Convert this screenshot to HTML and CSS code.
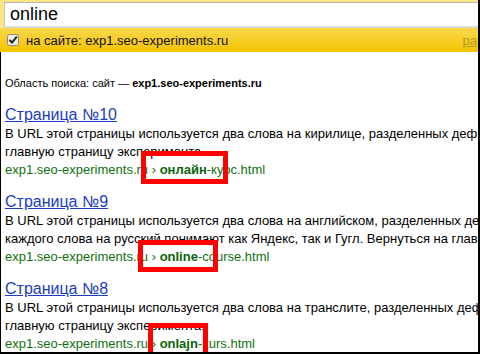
FILE: index.html
```html
<!DOCTYPE html>
<html lang="ru">
<head>
    <meta charset="UTF-8">
    <title>online — поиск по сайту</title>
    <link rel="stylesheet" href="styles.css">
</head>
<body>

<div class="page">
    <div class="header">
        <div class="search-box">online</div>
        <div class="site-row">
            <svg class="check" width="12" height="12" viewBox="0 0 12 12">
                <rect x="0.5" y="0.5" width="11" height="11" rx="2" fill="#ececE6" stroke="#8a8a80"/>
                <path d="M2.5 6 L5 8.6 L9.8 2.6" fill="none" stroke="#222" stroke-width="2"/>
            </svg>
            <span class="site-label">на сайте: exp1.seo-experiments.ru</span>
            <a class="more" href="#">ра</a>
        </div>
    </div>

    <div class="content">
        <div class="scope">Область поиска: сайт — <b>exp1.seo-experiments.ru</b></div>

        <div class="result">
            <a class="title" href="#">Страница №10</a>
            <div class="line">В URL этой страницы используется два слова на кирилице, разделенных дефи</div>
            <div class="line">главную страницу эксперимента.</div>
            <div class="url">exp1.seo-experiments.ru › <b>онлайн</b>-курс.html</div>
        </div>

        <div class="result">
            <a class="title" href="#">Страница №9</a>
            <div class="line">В URL этой страницы используется два слова на английском, разделенных де</div>
            <div class="line">каждого слова на русский понимают как Яндекс, так и Гугл. Вернуться на глав</div>
            <div class="url">exp1.seo-experiments.ru › <b>online</b>-course.html</div>
        </div>

        <div class="result">
            <a class="title" href="#">Страница №8</a>
            <div class="line">В URL этой страницы используется два слова на транслите, разделенных деф</div>
            <div class="line">главную страницу эксперимента.</div>
            <div class="url">exp1.seo-experiments.ru › <b>onlajn</b>-kurs.html</div>
        </div>
    </div>

    <div class="mark mark-1"></div>
    <div class="mark mark-2"></div>
    <div class="mark mark-3"></div>
</div>

</body>
</html>
```

FILE: styles.css
```css
body {
    margin: 0;
    background-color: #fff;
    font-family: "Liberation Sans", Arial, sans-serif;
}

.page {
    position: relative;
    width: 478px;
    height: 352px;
    overflow: hidden;
    border-right: 2px solid #000;
    border-bottom: 2px solid #000;
}

.header {
    padding-top: 2px;
    background-color: #fde586;
}

.search-box {
    height: 26px;
    margin-left: 4px;
    padding-left: 5px;
    box-sizing: border-box;
    background-color: #fff;
    border-top: 1px solid #b8b8b0;
    border-left: 1px solid #c8c8c0;
    border-bottom: 2px solid #dcdcd4;
    font-size: 18px;
    line-height: 23px;
    color: #000;
}

.site-row {
    display: flex;
    align-items: center;
    height: 24px;
    padding-left: 7px;
    background: linear-gradient(#fad84e, #f4c300);
    font-size: 13px;
    color: #111;
}

.check {
    flex: none;
    margin-right: 7px;
}

.site-label {
    white-space: nowrap;
    flex: 1;
}

.more {
    margin-right: 1px;
    color: #b79b2c;
    white-space: nowrap;
}

.content {
    border-left: 1px solid #000;
    padding: 24px 0 0 4px;
    height: 300px;
    overflow: hidden;
}

.scope {
    font-size: 11px;
    line-height: 14px;
    color: #000;
    white-space: nowrap;
    margin-bottom: 15px;
}

.result {
    margin-bottom: 13px;
    white-space: nowrap;
}

.title {
    display: inline-block;
    font-size: 16px;
    line-height: 20px;
    color: #1a3dc1;
    padding-right: 4px;
}

.line {
    font-size: 13px;
    line-height: 18px;
    color: #000;
}

.url {
    font-size: 13px;
    line-height: 18px;
    color: #107010;
}

.url b {
    color: #0b640b;
}

.mark {
    position: absolute;
    border: 5px solid #f00;
    box-sizing: border-box;
}

.mark-1 {
    left: 141px;
    top: 151px;
    width: 87px;
    height: 33px;
}

.mark-2 {
    left: 138px;
    top: 240px;
    width: 80px;
    height: 32px;
}

.mark-3 {
    left: 148px;
    top: 323px;
    width: 60px;
    height: 40px;
}
```
